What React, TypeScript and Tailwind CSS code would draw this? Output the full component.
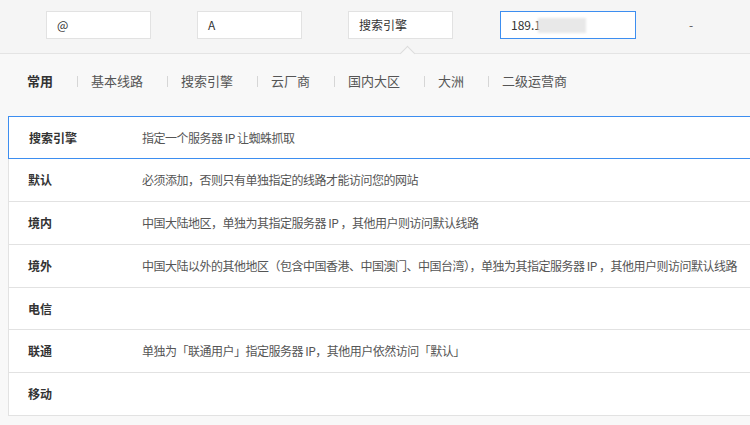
const tabs = ["基本线路", "搜索引擎", "云厂商", "国内大区", "大洲", "二级运营商"];

const rows = [
    { name: "搜索引擎", desc: "指定一个服务器 IP 让蜘蛛抓取", h: "h-[43px]" },
    { name: "默认", desc: "必须添加，否则只有单独指定的线路才能访问您的网站", h: "h-[43px]" },
    { name: "境内", desc: "中国大陆地区，单独为其指定服务器 IP ，其他用户则访问默认线路", h: "h-[43px]" },
    { name: "境外", desc: "中国大陆以外的其他地区（包含中国香港、中国澳门、中国台湾），单独为其指定服务器 IP ，其他用户则访问默认线路", h: "h-[43px]" },
    { name: "电信", desc: "", h: "h-[42px]" },
    { name: "联通", desc: "单独为「联通用户」指定服务器 IP，其他用户依然访问「默认」", h: "h-[43px]" },
    { name: "移动", desc: "", h: "h-[42px]" },
];

function Field({ value, wide, active }: { value: string; wide?: boolean; active?: boolean }) {
    return (
        <div
            className={`relative h-[28px] bg-white flex items-center pl-[10px] text-[12px] text-[#333] ${wide ? "w-[136px]" : "w-[105px]"} ${active ? "border border-[#3d8ef0]" : "border border-[#e2e2e2]"}`}
        >
            {value}
            {active && <span className="absolute left-[37px] top-[6px] w-[48px] h-[15px] bg-[#e8e8e8] blur-[1px]" />}
        </div>
    );
}

export default function App() {
    return (
        <div
            className="w-[750px] h-[425px] overflow-hidden bg-[#f5f5f5]"
            style={{ fontFamily: '"Noto Sans CJK SC", "Liberation Sans", sans-serif' }}
        >
            <section className="h-[53px] flex items-start pt-[11px] pl-[46px] gap-[46px]">
                <Field value="@" />
                <Field value="A" />
                <Field value="搜索引擎" />
                <div className="ml-[1px]">
                    <Field value="189.1" wide active />
                </div>
                <span className="ml-[7px] mt-[5px] text-[12px] text-[#555]">-</span>
            </section>

            <section className="relative bg-[#f8f8f8] border-t border-[#e4e4e4] h-[372px]">
                <span className="absolute left-[402px] top-[-6px] w-[11px] h-[11px] rotate-45 bg-[#f8f8f8] border-l border-t border-[#dcdcdc]" />

                <nav className="flex items-center pl-[27px] h-[54px] text-[13px] text-[#555]">
                    <span className="font-bold text-[#333]">常用</span>
                    {tabs.map((t) => (
                        <div key={t} className="flex items-center">
                            <span className="mx-[24px] w-px h-[11px] bg-[#d6d6d6]" />
                            <span className="-ml-[11px]">{t}</span>
                        </div>
                    ))}
                </nav>

                <div className="ml-[8px] mt-[8px] w-[760px] bg-white border-l border-b border-[#e2e2e2]">
                    {rows.map((r, i) => (
                        <div
                            key={r.name}
                            className={`flex items-center text-[12px] ${r.h} ${i === 0 ? "border border-[#3d8ef0] -ml-px" : "border-b border-[#e2e2e2] last:border-b-0"}`}
                        >
                            <span className={`w-[133px] shrink-0 font-bold text-[#333] ${i === 0 ? "pl-[20px]" : "pl-[19px]"}`}>{r.name}</span>
                            <span className="text-[#555] tracking-[-0.5px] whitespace-nowrap">{r.desc}</span>
                        </div>
                    ))}
                </div>
            </section>
        </div>
    );
}
